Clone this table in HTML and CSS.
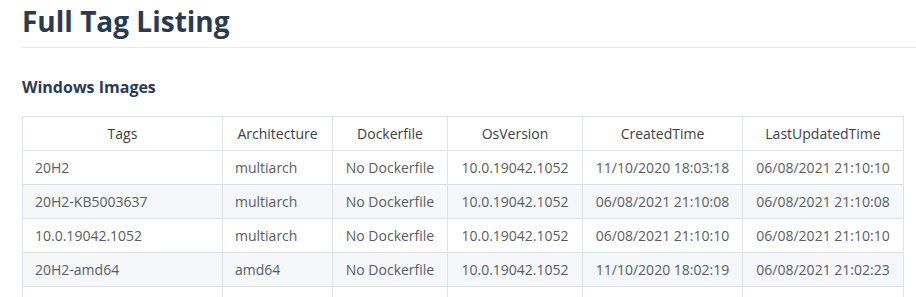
FILE: index.html
```html
<!DOCTYPE html>
<html>
<head>
<meta charset="utf-8">
<link rel="stylesheet" href="styles.css">
</head>
<body>
<main class="page">
  <h1 class="title">Full Tag Listing</h1>
  <h2 class="section">Windows Images</h2>
  <table class="tags">
    <colgroup>
      <col class="c1"><col class="c2"><col class="c3"><col class="c4"><col class="c5"><col class="c6">
    </colgroup>
    <thead>
      <tr><th>Tags</th><th>Architecture</th><th>Dockerfile</th><th>OsVersion</th><th>CreatedTime</th><th>LastUpdatedTime</th></tr>
    </thead>
    <tbody>
      <tr><td>20H2</td><td>multiarch</td><td class="ctr">No Dockerfile</td><td class="ctr">10.0.19042.1052</td><td class="ctr">11/10/2020 18:03:18</td><td class="ctr">06/08/2021 21:10:10</td></tr>
      <tr><td>20H2-KB5003637</td><td>multiarch</td><td class="ctr">No Dockerfile</td><td class="ctr">10.0.19042.1052</td><td class="ctr">06/08/2021 21:10:08</td><td class="ctr">06/08/2021 21:10:08</td></tr>
      <tr><td>10.0.19042.1052</td><td>multiarch</td><td class="ctr">No Dockerfile</td><td class="ctr">10.0.19042.1052</td><td class="ctr">06/08/2021 21:10:10</td><td class="ctr">06/08/2021 21:10:10</td></tr>
      <tr><td>20H2-amd64</td><td>amd64</td><td class="ctr">No Dockerfile</td><td class="ctr">10.0.19042.1052</td><td class="ctr">11/10/2020 18:02:19</td><td class="ctr">06/08/2021 21:02:23</td></tr>
      <tr><td>&nbsp;</td><td></td><td></td><td></td><td></td><td></td></tr>
    </tbody>
  </table>
</main>
</body>
</html>
```

FILE: styles.css
```css
html, body {
  margin: 0;
  padding: 0;
  background: #ffffff;
}
body {
  font-family: "Open Sans", "Noto Sans", sans-serif;
  overflow: hidden;
}
.page {
  padding: 4px 0 0 22px;
}
.title {
  margin: 0;
  font-size: 28px;
  line-height: 34px;
  font-weight: 700;
  color: #2a3b4f;
  padding-bottom: 9px;
  border-bottom: 1px solid #e6e8ea;
}
.section {
  margin: 29px 0 0 0;
  font-size: 16px;
  line-height: 20px;
  font-weight: 700;
  color: #2a3b4f;
}
.tags {
  margin-top: 19px;
  border-collapse: collapse;
  table-layout: fixed;
  width: 882px;
  font-size: 14px;
  color: #585d62;
}
.c1 { width: 200px; }
.c2 { width: 110px; }
.c3 { width: 115px; }
.c4 { width: 135px; }
.c5 { width: 160px; }
.c6 { width: 161px; }
.tags th,
.tags td {
  border: 1px solid #dee2e6;
  height: 34px;
  padding: 0 12px;
  vertical-align: middle;
  white-space: nowrap;
  box-sizing: border-box;
}
.tags th {
  font-weight: 400;
  color: #3a3f44;
  text-align: center;
}
.tags td {
  text-align: left;
}
.tags td.ctr {
  text-align: center;
  padding: 0 4px;
}
.tags tbody tr:nth-child(even) td {
  background: #f5f7f9;
}
```
